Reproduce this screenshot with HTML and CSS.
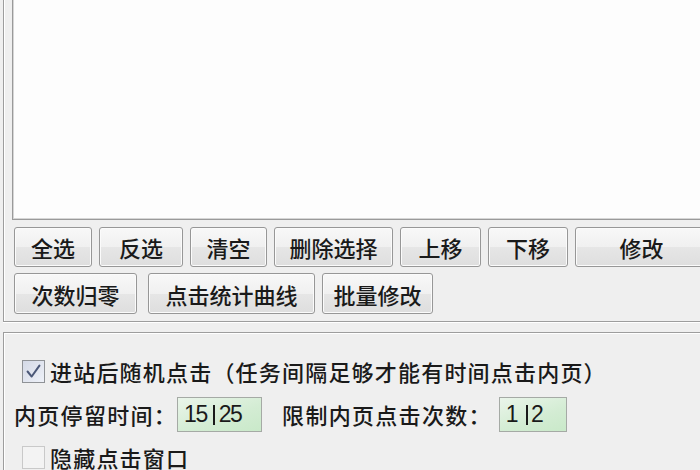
FILE: index.html
```html
<!DOCTYPE html>
<html lang="zh-CN">
<head>
<meta charset="utf-8">
<title>点击设置</title>
<link rel="stylesheet" href="styles.css">
</head>
<body>
<div class="window">
  <div class="group group-top">
    <div class="listbox"></div>
    <div class="btnrow row1">
      <button class="btn w-qx">全选</button>
      <button class="btn w-fx">反选</button>
      <button class="btn w-qk">清空</button>
      <button class="btn w-sc">删除选择</button>
      <button class="btn w-sy">上移</button>
      <button class="btn w-xy">下移</button>
      <button class="btn w-xg">修改</button>
    </div>
    <div class="btnrow row2">
      <button class="btn w-gl">次数归零</button>
      <button class="btn w-qx2">点击统计曲线</button>
      <button class="btn w-pl">批量修改</button>
    </div>
  </div>
  <div class="group group-bottom">
    <label class="check-row first">
      <span class="box checked"><svg viewBox="0 0 23 23" width="21" height="21"><path d="M5 11.5 L9.5 17 L18 5" fill="none" stroke="#4b5878" stroke-width="2.2" stroke-linecap="round" stroke-linejoin="round"/></svg></span>
      <span class="text">进站后随机点击（任务间隔足够才能有时间点击内页）</span>
    </label>
    <div class="field-row">
      <span class="label l1">内页停留时间：</span>
      <span class="input in1"><span class="num">15</span><span class="bar"></span><span class="num">25</span></span>
      <span class="label l2">限制内页点击次数：</span>
      <span class="input in2"><span class="num">1</span><span class="bar"></span><span class="num">2</span></span>
    </div>
    <label class="check-row last">
      <span class="box"></span>
      <span class="text">隐藏点击窗口</span>
    </label>
  </div>
</div>
</body>
</html>
```

FILE: styles.css
```css
html, body {
  margin: 0;
  padding: 0;
}
body {
  width: 700px;
  height: 470px;
  overflow: hidden;
  background: #efefef;
  font-family: "Noto Sans CJK SC", "Noto Sans", sans-serif;
  font-size: 22px;
  font-weight: 500;
  color: #1a1a1a;
}
.window {
  width: 760px;
  padding-left: 3px;
}
.group {
  border-left: 1px solid #9d9d9d;
  box-shadow: inset 1px 0 #ffffff;
}
.group-top {
  border-bottom: 1px solid #9d9d9d;
  padding: 0 0 7px 8px;
  box-shadow: inset 1px 0 #ffffff, 0 1px #ffffff;
}
.listbox {
  height: 219px;
  background: #fdfdfd;
  border-left: 1px solid #9a9a9a;
  border-bottom: 1px solid #9a9a9a;
  box-shadow: inset 1px 0 #d6d6d6, inset 0 -1px #d6d6d6;
}
.btnrow {
  display: flex;
  gap: 7px;
  padding-left: 2px;
}
.row1 { margin-top: 7px; }
.row2 { margin-top: 6px; }
.btn {
  box-sizing: border-box;
  height: 40px;
  flex: none;
  margin: 0;
  padding: 0;
  border: 1px solid #979797;
  border-radius: 3px;
  background: linear-gradient(#f8f8f8, #f0f0f0 50%, #e6e6e6 51%, #dedede);
  box-shadow: inset 0 0 0 1px #fbfbfb;
  font-family: inherit;
  font-size: 22px;
  font-weight: 500;
  line-height: 1;
  color: #1a1a1a;
  display: flex;
  align-items: center;
  justify-content: center;
}
.row2 .btn { height: 41px; }
.w-qx { width: 78px; }
.w-fx { width: 84px; }
.w-qk { width: 77px; }
.w-sc { width: 119px; }
.w-sy { width: 81px; }
.w-xy { width: 80px; }
.w-xg { width: 133px; }
.w-gl { width: 123px; margin-right: 4px; }
.w-qx2 { width: 167px; }
.w-pl { width: 111px; }

.group-bottom {
  margin-top: 10px;
  border-top: 1px solid #9d9d9d;
  box-shadow: inset 1px 1px #ffffff;
  padding-top: 25px;
  height: 200px;
}
.check-row {
  display: flex;
  align-items: center;
  height: 26px;
  line-height: 26px;
  padding-left: 18px;
  white-space: nowrap;
}
.check-row.last { margin-top: 12px; }
.box {
  box-sizing: border-box;
  width: 23px;
  height: 23px;
  flex: none;
  border: 1px solid #c9c9c9;
  background: #f3f3f3;
  display: flex;
  align-items: center;
  justify-content: center;
}
.box.checked {
  border-color: #8f9296;
  background: linear-gradient(135deg, #d4d9e6, #eef1f8);
}
.check-row .text {
  margin-left: 5px;
  letter-spacing: 1.2px;
}
.field-row {
  display: flex;
  align-items: center;
  height: 35px;
  margin-top: 13px;
  padding-left: 10px;
  white-space: nowrap;
}
.label { line-height: 35px; letter-spacing: 1.3px; }
.l1 { margin-right: 0; }
.l2 { margin-left: 20px; margin-right: 7px; }
.input {
  box-sizing: border-box;
  height: 35px;
  border: 1px solid #a5aaa5;
  background: linear-gradient(160deg, #eaf5ea, #d3ecd3 60%, #c9e9c9);
  display: flex;
  align-items: center;
  font-family: "Liberation Sans", Arial, sans-serif;
  font-size: 23px;
  font-weight: 400;
  color: #1a1a1a;
  padding-left: 6px;
}
.in1 { width: 85px; }
.in2 { width: 68px; }
.num { letter-spacing: -1.5px; }
.bar {
  display: inline-block;
  width: 2px;
  height: 20px;
  background: #1a1a1a;
  margin: 0 4px 0 6px;
}
.in2 .bar { margin: 0 3px 0 9px; }
```
